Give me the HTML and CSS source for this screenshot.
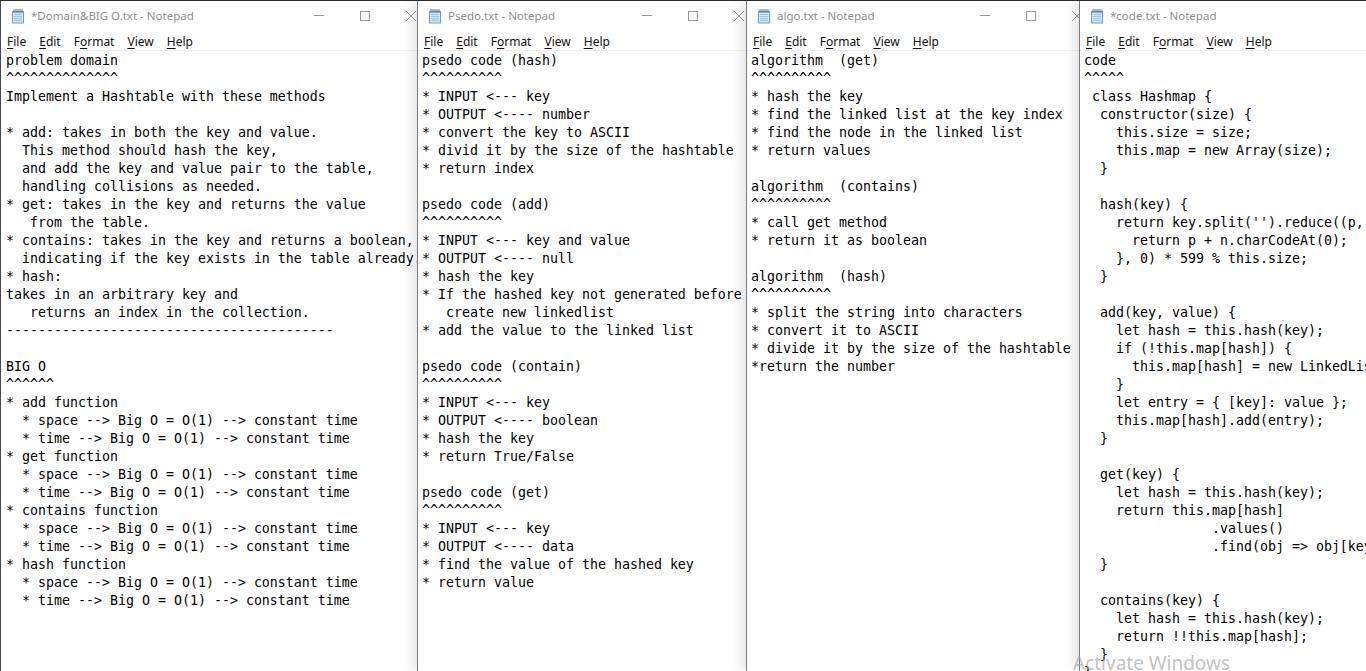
FILE: index.html
```html
<!DOCTYPE html>
<html>
<head>
<meta charset="utf-8">
<link rel="stylesheet" href="styles.css">
<title>Notepad windows</title>
</head>
<body>
<div class="desk">
  <section class="win w1">
    <div class="frame">
      <div class="titlebar">
        <svg class="icon" width="16" height="16" viewBox="0 0 16 16"><rect x="2.5" y="3.5" width="11" height="11.5" fill="#cfe7f8" stroke="#6f9fc6"/><path d="M4 6.5h8M4 8.5h8M4 10.5h8M4 12.5h8" stroke="#9cc6e6" stroke-width="1"/><path d="M4 1v4M6 1v4M8 1v4M10 1v4M12 1v4" stroke="#5b6f80" stroke-width="1"/></svg>
        <span class="title">*Domain&amp;BIG O.txt - Notepad</span>
        <span class="btns"><span class="btn"><span class="min"></span></span><span class="btn"><span class="max"></span></span><span class="btn"><svg width="10" height="10" viewBox="0 0 10 10"><path d="M0 0L10 10M10 0L0 10" stroke="#999" stroke-width="1"/></svg></span></span>
      </div>
      <div class="menubar"><span><u>F</u>ile</span><span><u>E</u>dit</span><span>F<u>o</u>rmat</span><span><u>V</u>iew</span><span><u>H</u>elp</span></div>
    </div>
<pre class="text">problem domain
^^^^^^^^^^^^^^
Implement a Hashtable with these methods

* add: takes in both the key and value.
  This method should hash the key,
  and add the key and value pair to the table,
  handling collisions as needed.
* get: takes in the key and returns the value
   from the table.
* contains: takes in the key and returns a boolean,
  indicating if the key exists in the table already.
* hash:
takes in an arbitrary key and
   returns an index in the collection.
-----------------------------------------

BIG O
^^^^^^
* add function
  * space --&gt; Big O = O(1) --&gt; constant time
  * time --&gt; Big O = O(1) --&gt; constant time
* get function
  * space --&gt; Big O = O(1) --&gt; constant time
  * time --&gt; Big O = O(1) --&gt; constant time
* contains function
  * space --&gt; Big O = O(1) --&gt; constant time
  * time --&gt; Big O = O(1) --&gt; constant time
* hash function
  * space --&gt; Big O = O(1) --&gt; constant time
  * time --&gt; Big O = O(1) --&gt; constant time</pre>
  </section>

  <section class="win w2">
    <div class="frame">
      <div class="titlebar">
        <svg class="icon" width="16" height="16" viewBox="0 0 16 16"><rect x="2.5" y="3.5" width="11" height="11.5" fill="#cfe7f8" stroke="#6f9fc6"/><path d="M4 6.5h8M4 8.5h8M4 10.5h8M4 12.5h8" stroke="#9cc6e6" stroke-width="1"/><path d="M4 1v4M6 1v4M8 1v4M10 1v4M12 1v4" stroke="#5b6f80" stroke-width="1"/></svg>
        <span class="title">Psedo.txt - Notepad</span>
        <span class="btns"><span class="btn"><span class="min"></span></span><span class="btn"><span class="max"></span></span><span class="btn"><svg width="10" height="10" viewBox="0 0 10 10"><path d="M0 0L10 10M10 0L0 10" stroke="#999" stroke-width="1"/></svg></span></span>
      </div>
      <div class="menubar"><span><u>F</u>ile</span><span><u>E</u>dit</span><span>F<u>o</u>rmat</span><span><u>V</u>iew</span><span><u>H</u>elp</span></div>
    </div>
<pre class="text">psedo code (hash)
^^^^^^^^^^
* INPUT &lt;--- key
* OUTPUT &lt;---- number
* convert the key to ASCII
* divid it by the size of the hashtable
* return index

psedo code (add)
^^^^^^^^^^
* INPUT &lt;--- key and value
* OUTPUT &lt;---- null
* hash the key
* If the hashed key not generated before
   create new linkedlist
* add the value to the linked list

psedo code (contain)
^^^^^^^^^^
* INPUT &lt;--- key
* OUTPUT &lt;---- boolean
* hash the key
* return True/False

psedo code (get)
^^^^^^^^^^
* INPUT &lt;--- key
* OUTPUT &lt;---- data
* find the value of the hashed key
* return value</pre>
  </section>

  <section class="win w3">
    <div class="frame">
      <div class="titlebar">
        <svg class="icon" width="16" height="16" viewBox="0 0 16 16"><rect x="2.5" y="3.5" width="11" height="11.5" fill="#cfe7f8" stroke="#6f9fc6"/><path d="M4 6.5h8M4 8.5h8M4 10.5h8M4 12.5h8" stroke="#9cc6e6" stroke-width="1"/><path d="M4 1v4M6 1v4M8 1v4M10 1v4M12 1v4" stroke="#5b6f80" stroke-width="1"/></svg>
        <span class="title">algo.txt - Notepad</span>
        <span class="btns"><span class="btn"><span class="min"></span></span><span class="btn"><span class="max"></span></span><span class="btn"><svg width="10" height="10" viewBox="0 0 10 10"><path d="M0 0L10 10M10 0L0 10" stroke="#999" stroke-width="1"/></svg></span></span>
      </div>
      <div class="menubar"><span><u>F</u>ile</span><span><u>E</u>dit</span><span>F<u>o</u>rmat</span><span><u>V</u>iew</span><span><u>H</u>elp</span></div>
    </div>
<pre class="text">algorithm  (get)
^^^^^^^^^^
* hash the key
* find the linked list at the key index
* find the node in the linked list
* return values

algorithm  (contains)
^^^^^^^^^^
* call get method
* return it as boolean

algorithm  (hash)
^^^^^^^^^^
* split the string into characters
* convert it to ASCII
* divide it by the size of the hashtable
*return the number</pre>
  </section>

  <section class="win w4">
    <div class="frame">
      <div class="titlebar">
        <svg class="icon" width="16" height="16" viewBox="0 0 16 16"><rect x="2.5" y="3.5" width="11" height="11.5" fill="#cfe7f8" stroke="#6f9fc6"/><path d="M4 6.5h8M4 8.5h8M4 10.5h8M4 12.5h8" stroke="#9cc6e6" stroke-width="1"/><path d="M4 1v4M6 1v4M8 1v4M10 1v4M12 1v4" stroke="#5b6f80" stroke-width="1"/></svg>
        <span class="title">*code.txt - Notepad</span>
      </div>
      <div class="menubar"><span><u>F</u>ile</span><span><u>E</u>dit</span><span>F<u>o</u>rmat</span><span><u>V</u>iew</span><span><u>H</u>elp</span></div>
    </div>
<pre class="text">code
^^^^^
 class Hashmap {
  constructor(size) {
    this.size = size;
    this.map = new Array(size);
  }

  hash(key) {
    return key.split('').reduce((p, n) =&gt; {
      return p + n.charCodeAt(0);
    }, 0) * 599 % this.size;
  }

  add(key, value) {
    let hash = this.hash(key);
    if (!this.map[hash]) {
      this.map[hash] = new LinkedList();
    }
    let entry = { [key]: value };
    this.map[hash].add(entry);
  }

  get(key) {
    let hash = this.hash(key);
    return this.map[hash]
                .values()
                .find(obj =&gt; obj[key]);
  }

  contains(key) {
    let hash = this.hash(key);
    return !!this.map[hash];
  }
}</pre>
  </section>

  <div class="watermark">Activate Windows</div>
</div>
</body>
</html>
```
FILE: styles.css
```css
* { box-sizing: border-box; }
html, body { margin: 0; padding: 0; background: #fff; }
body { width: 1366px; height: 671px; overflow: hidden; }

.desk {
  position: relative;
  display: flex;
  width: 1366px;
  height: 671px;
  border-top: 1px solid #2b2b2b;
  overflow: hidden;
}

.win {
  position: relative;
  flex: none;
  height: 100%;
  background: #fff;
  border-left: 1px solid #7d7d7d;
}
.w1 { width: 417px; border-left-color: #4a4a4a; overflow: hidden; }
.w2 { width: 329px; }
.w3 { width: 333px; }
.w4 { width: 287px; }

.w2, .w3, .w4 {
  box-shadow: -5px 0 10px rgba(0,0,0,0.10);
  clip-path: inset(0 0 0 -20px);
}

.frame { width: 100%; }
.w1 .titlebar { width: 433px; }
.w2 .titlebar { width: 344px; }
.w3 .titlebar { width: 353px; }

.titlebar {
  display: flex;
  align-items: center;
  height: 30px;
  padding-left: 9px;
  padding-bottom: 1px;
  font-family: "Segoe UI", "Noto Sans", "Open Sans", sans-serif;
  font-size: 11.5px;
  color: #8f8f8f;
  white-space: nowrap;
  background: #fff;
}
.icon { flex: none; }
.title { margin-left: 5px; flex: 1; }

.btns { display: flex; height: 29px; }
.btn {
  width: 46px;
  height: 29px;
  display: flex;
  align-items: center;
  justify-content: center;
}
.min { width: 10px; height: 1px; background: #9a9a9a; }
.max { width: 10px; height: 10px; border: 1px solid #9a9a9a; }

.menubar {
  display: flex;
  height: 20px;
  padding-top: 1px;
  align-items: center;
  font-family: "Segoe UI", "Noto Sans", "Open Sans", sans-serif;
  font-size: 12px;
  color: #111;
  border-bottom: 1px solid #f0f0f0;
  white-space: nowrap;
}
.menubar span { padding: 0 7px 0 6px; }
.menubar u { text-decoration-thickness: 1px; text-underline-offset: 2px; }

.text {
  margin: 0;
  padding: 1px 0 0 4px;
  font-family: "DejaVu Sans Mono", "Liberation Mono", monospace;
  font-size: 13.29px;
  line-height: 18px;
  color: #000;
  white-space: pre;
}
.w1 .text { padding-left: 5px; }

.watermark {
  position: absolute;
  left: 1073px;
  top: 649px;
  font-family: "Segoe UI", "Noto Sans", "Open Sans", sans-serif;
  font-size: 19px;
  color: rgba(160,160,160,0.65);
  white-space: nowrap;
  pointer-events: none;
}
```
